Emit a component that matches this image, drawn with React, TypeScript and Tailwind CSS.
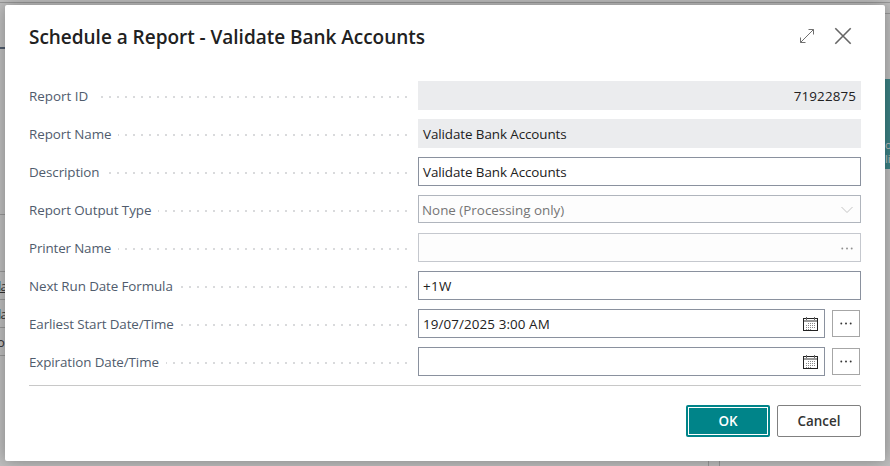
import type { ReactNode } from "react";

const inputBase = "flex w-full items-center justify-between border text-[13.4px] tracking-[-0.08px]";

function Row({ label, labelClass, children }: { label: string; labelClass: string; children: ReactNode }) {
  return (
    <div className="flex h-[38px] items-start">
      <div className="mr-[11px] flex h-[29px] w-[378px] shrink-0 items-center bg-[linear-gradient(to_right,#d9dadc_2px,transparent_2px)] bg-[length:8px_2px] bg-[position:0_15px] bg-repeat-x">
        <span className={`h-[29px] shrink-0 whitespace-nowrap bg-white text-[13.4px] leading-[30px] text-[#505c6d] ${labelClass}`}>
          {label}
        </span>
      </div>
      <div className="flex w-[443px] items-start">{children}</div>
    </div>
  );
}

function Calendar() {
  return (
    <svg className="mr-[6px] h-4 w-4" viewBox="0 0 16 16" fill="none" shapeRendering="crispEdges">
      <path d="M1 2.5h15M1.5 2v13M15.5 2v13M1 14.5h15" stroke="#222" />
      <path d="M2 4.5h13M2 5.5h13" stroke="#999" />
      <path d="M4 1h1v3H4zM12 1h1v3h-1z" fill="#666" />
      <path d="M6 7.5h8M4 9.5h10M4 11.5h10M4 13.5h6" stroke="#8a8a8a" strokeDasharray="1 1" />
    </svg>
  );
}

function Dots({ color }: { color: string }) {
  return (
    <svg className="h-[3px] w-3" viewBox="0 0 12 3" fill={color}>
      <circle cx="1.3" cy="1.5" r=".95" />
      <circle cx="6" cy="1.5" r=".95" />
      <circle cx="10.7" cy="1.5" r=".95" />
    </svg>
  );
}

function DateField({ value }: { value: string }) {
  return (
    <>
      <div className={`${inputBase} h-[29px] border-[#8a919e] pl-1 text-[#212121]`}>
        <span className="mt-px tracking-[0.1px]">{value}</span>
        <Calendar />
      </div>
      <button className="ml-[7px] mr-px mt-px flex h-[27px] w-7 shrink-0 items-center justify-center border border-[#a6a6a6]">
        <Dots color="#333" />
      </button>
    </>
  );
}

export default function App() {
  return (
    <div className="relative h-[466px] w-[890px] overflow-hidden bg-[#bfbfbf] p-[5px] font-['Open_Sans','Noto_Sans',sans-serif]">
      <div className="absolute left-0 top-[2px] h-px w-full bg-[#999]" />
      <div className="absolute left-0 top-[47px] h-[2px] w-[5px] bg-[#505c6d]" />
      <div className="absolute left-0 top-[214px] h-px w-[5px] bg-[#999]" />
      <div className="absolute left-0 top-[271px] h-px w-[5px] bg-[#999]" />
      <div className="absolute left-0 top-[299px] h-px w-[5px] bg-[#999]" />
      <div className="absolute left-0 top-[327px] h-px w-[5px] bg-[#999]" />
      <div className="absolute left-0 top-[355px] h-px w-[5px] bg-[#999]" />
      <div className="absolute -left-[2px] top-[277px] text-[13px] leading-[19px] tracking-[-0.8px] text-[#333] underline">la</div>
      <div className="absolute -left-[2px] top-[305px] text-[13px] leading-[19px] tracking-[-0.8px] text-[#333]">la</div>
      <div className="absolute -left-[3px] top-[333px] text-[13px] leading-[19px] text-[#333]">o</div>
      <div className="absolute right-0 top-[13px] h-px w-[5px] bg-[#999]" />
      <div className="absolute right-0 top-[79px] h-[90px] w-[5px] overflow-hidden bg-[#3c8285] pt-[59px] text-[11px] leading-[14px] text-[#c3c3c3]">
        <div>o</div>
        <div>li</div>
      </div>
      <div className="absolute bottom-0 left-[708px] h-[5px] w-[12px] border-x border-[#999]" />
      <main className="relative flex h-[456px] w-[880px] flex-col rounded-[2px] bg-white px-6 shadow-[0_0_16px_rgba(0,0,0,0.32)]">
        <header className="flex h-[76px] items-start justify-between">
          <h1 className="mt-[17px] whitespace-nowrap text-[19px] font-semibold leading-[30px] tracking-[-0.03px] text-[#212121]">
            Schedule a Report - Validate Bank Accounts
          </h1>
          <div className="mr-[9px] mt-[22px] flex gap-[19px]">
            <svg className="mt-px h-4 w-4" viewBox="0 0 16 16" fill="none" stroke="#707070">
              <path d="M1.5 14.5l13-13M9.5 1.5h5v5M1.5 9.5v5h5" />
            </svg>
            <svg className="h-[18px] w-[18px]" viewBox="0 0 18 18" fill="none" stroke="#666" strokeWidth="1.6">
              <path d="M1.3 1.3l15.4 15.4M16.7 1.3l-15.4 15.4" />
            </svg>
          </div>
        </header>
        <section className="h-[304px]">
          <Row label="Report ID" labelClass="w-[68px]">
            <div className={`${inputBase} h-[29px] border-[#ebecee] bg-[#ebecee] pr-[4px] text-[#212121]`}>
              <span className="ml-auto mt-[2px] tracking-[0.12px]">71922875</span>
            </div>
          </Row>
          <Row label="Report Name" labelClass="w-[89px] tracking-[-0.07px]">
            <div className={`${inputBase} h-[29px] border-[#ebecee] bg-[#ebecee] pl-1 text-[#212121]`}>
              <span className="mt-[2px]">Validate Bank Accounts</span>
            </div>
          </Row>
          <Row label="Description" labelClass="w-[77px] tracking-[-0.1px]">
            <div className={`${inputBase} h-[29px] border-[#8a919e] pl-1 text-[#212121]`}>
              <span className="mt-[2px]">Validate Bank Accounts</span>
            </div>
          </Row>
          <Row label="Report Output Type" labelClass="w-[129px] tracking-[-0.07px]">
            <div className={`${inputBase} h-[28px] border-[#b0b5bd] bg-[#fdfdfd] pl-[3px] text-[#757575]`}>
              <span className="mt-[2px] tracking-normal">None (Processing only)</span>
              <svg className="mr-[7px] mt-[2px] h-2 w-3" viewBox="0 0 12 8" fill="none" stroke="#c4c4c4">
                <path d="M.5 1l5.5 5.5L11.5 1" />
              </svg>
            </div>
          </Row>
          <Row label="Printer Name" labelClass="w-[89px] tracking-[-0.15px]">
            <div className={`${inputBase} h-[29px] border-[#c5c8ce] bg-[#fdfdfd] pr-[7px]`}>
              <span />
              <span className="mt-[2px] flex"><Dots color="#909090" /></span>
            </div>
          </Row>
          <Row label="Next Run Date Formula" labelClass="w-[151px] tracking-[-0.1px]">
            <div className={`${inputBase} h-[29px] border-[#8a919e] pl-1 text-[#212121]`}>
              <span className="mt-[2px] tracking-[0.3px]">+1W</span>
            </div>
          </Row>
          <Row label="Earliest Start Date/Time" labelClass="w-[151px] tracking-[-0.12px]">
            <DateField value="19/07/2025 3:00 AM" />
          </Row>
          <Row label="Expiration Date/Time" labelClass="w-[137px] tracking-[-0.1px]">
            <DateField value="" />
          </Row>
        </section>
        <footer className="flex justify-end gap-[7px] border-t border-[#c8c8c8] pt-[19px] text-[13.4px] font-semibold">
          <button className="h-8 w-[84px] rounded-[2px] bg-[#008489] p-[2px] text-white">
            <span className="flex h-full items-center justify-center border border-white">OK</span>
          </button>
          <button className="h-8 w-[84px] rounded-[2px] border border-[#808080] text-[#333]">Cancel</button>
        </footer>
      </main>
    </div>
  );
}
